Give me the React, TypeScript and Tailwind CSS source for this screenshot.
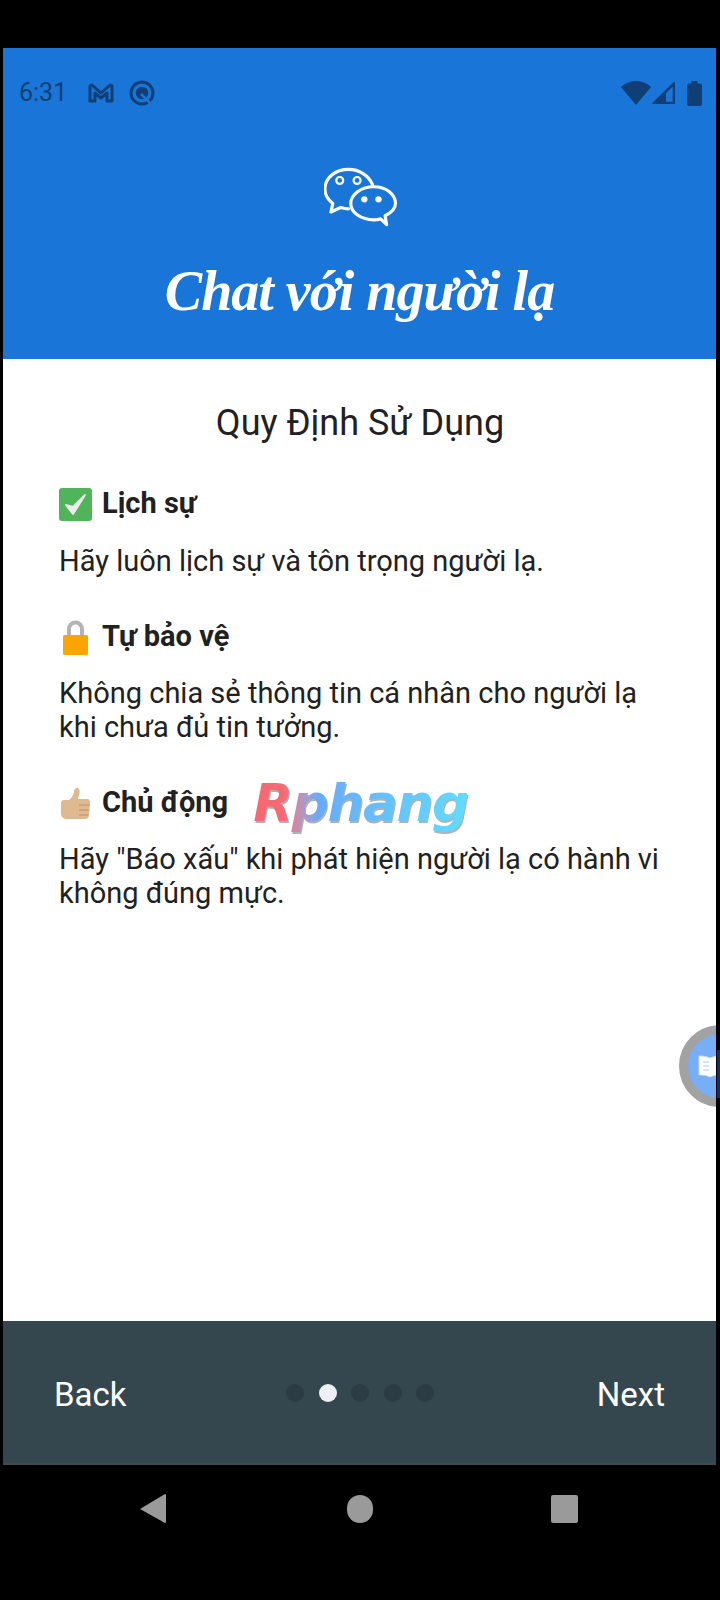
export default function App() {
  const dots = [false, true, false, false, false];
  return (
    <div className="relative w-[720px] h-[1600px] bg-black pt-[48px] pl-[3px] pr-[4px] font-['Roboto',sans-serif] overflow-hidden">
      {/* Header */}
      <header className="h-[311px] bg-[#1976d8] flex flex-col items-center">
        <div className="w-full h-[90px] flex items-center pl-[16px] pr-[14px] text-[#0f3f74]">
          <span className="text-[25px] w-[69px]">6:31</span>
          <svg width="26" height="20" viewBox="0 0 26 20" fill="none" stroke="currentColor" strokeWidth="3" strokeLinejoin="round">
            <path d="M2 18V3.500c0-1.500 1.600-2 2.600-1L13 10l8.400-7.500c1-1 2.600-.5 2.600 1V18h-5V10l-6 5-6-5v8z" />
          </svg>
          <svg className="ml-[15px]" width="26" height="26" viewBox="0 0 26 26" fill="none" stroke="currentColor">
            <circle cx="13" cy="13" r="11" strokeWidth="3" />
            <circle cx="13" cy="13" r="5.500" fill="currentColor" strokeWidth="1.500" />
            <path d="M12 14l9 9" stroke="#1976d8" strokeWidth="2.500" />
          </svg>
          <div className="ml-auto flex items-center">
            <svg width="30" height="24" viewBox="0 0 30 24" fill="currentColor">
              <path d="M15 24L0 6C4 2.500 9 0 15 0s11 2.500 15 6z" />
            </svg>
            <svg className="ml-[1px]" width="23" height="22" viewBox="0 0 23 22">
              <path d="M22 1.500V21H2z" fill="none" stroke="currentColor" strokeWidth="2.500" />
              <path d="M14 10v11H2.500z" fill="currentColor" />
            </svg>
            <svg className="ml-[12px]" width="15" height="25" viewBox="0 0 15 25" fill="currentColor">
              <path d="M4.500 0h6v2.500H13a2 2 0 0 1 2 2V23a2 2 0 0 1-2 2H2a2 2 0 0 1-2-2V4.500a2 2 0 0 1 2-2h2.500z" />
            </svg>
          </div>
        </div>
        <svg className="mt-[29px] ml-[2px]" width="74" height="60" viewBox="70 50 235 185" fill="none" stroke="#fff" strokeWidth="10" strokeLinejoin="round" strokeLinecap="round">
          <path d="M224 103C212 74 182 55 148 55 106 55 73 82 73 117c0 18 9 34 25 46l-6 27 31-14c10 3 16 4 25 4" />
          <path d="M228 110c-40 0-73 24-73 53s33 52 73 52c8 0 15-1 22-3l19 18-5-28c20-10 33-23 33-39 0-29-29-53-69-53z" />
          <circle cx="120" cy="90" r="11" strokeWidth="7" />
          <circle cx="175" cy="90" r="11" strokeWidth="7" />
          <circle cx="198" cy="150" r="10" fill="#fff" stroke="none" />
          <circle cx="243" cy="150" r="10" fill="#fff" stroke="none" />
        </svg>
        <h1 className="mt-[29px] text-white text-[56px] leading-[70px] font-bold italic font-['Liberation_Serif',cursive] tracking-[-1px] whitespace-nowrap">
          Chat với người lạ
        </h1>
      </header>

      {/* Rules */}
      <main className="relative h-[962px] bg-white pt-[44px] pl-[56px] pr-[40px] text-[#212121] overflow-hidden">
        <h2 className="text-center text-[36px] leading-[40px] pr-[15px] mb-[43px]">Quy Định Sử Dụng</h2>

        <div className="flex items-center h-[36px] text-[29px] font-bold">
          <svg className="w-[33px] h-[33px] mr-[10px]" viewBox="0 0 33 33">
            <rect width="33" height="33" rx="3" fill="#4fb45a" />
            <path d="M7 17l7 9L26 7l-12 12z" fill="#ececec" stroke="#ececec" strokeWidth="2" strokeLinejoin="round" />
          </svg>
          Lịch sự
        </div>
        <p className="mt-[22px] text-[29px] leading-[34px]">Hãy luôn lịch sự và tôn trọng người lạ.</p>

        <div className="mt-[41px] flex items-center h-[36px] text-[29px] font-bold">
          <svg className="w-[33px] h-[35px] mr-[10px]" viewBox="0 0 33 35">
            <path d="M10 17V9a6.500 6.500 0 0 1 13 0v8" fill="none" stroke="#b4b4b4" strokeWidth="4" />
            <rect x="4" y="15" width="25" height="20" rx="1.500" fill="#fba504" />
          </svg>
          Tự bảo vệ
        </div>
        <p className="mt-[21px] text-[29px] leading-[34px]">
          Không chia sẻ thông tin cá nhân cho người lạ
          <br />
          khi chưa đủ tin tưởng.
        </p>

        <div className="mt-[41px] flex items-center h-[36px] text-[29px] font-bold">
          <svg className="w-[33px] h-[33px] mr-[10px]" viewBox="0 0 33 33">
            <path d="M2 16c0-2 1-3 3-3h5c3-2 4-5 5-8 0-3 2-5 4-4 2 1 2 4 1 7l-1 4h9c2 0 3 1 3 3l-1 13c0 3-2 4-4 4H8c-3 0-6-2-6-5z" fill="#dfb98f" />
            <path d="M20 18h11M20 23h10M20 28h9" stroke="#bd9368" strokeWidth="1.200" />
          </svg>
          Chủ động
          <span className="ml-[25px] text-[52px] leading-[76px] font-bold italic font-['DejaVu_Sans',sans-serif] tracking-[-1.5px] bg-linear-to-r from-[#f56a72] from-14% via-[#69aaf7] via-30% to-[#62dcfc] bg-clip-text text-transparent drop-shadow-[1px_2px_0_#a9b4b8]">
            Rphang
          </span>
        </div>
        <p className="mt-[21px] text-[29px] leading-[34px]">
          Hãy "Báo xấu" khi phát hiện người lạ có hành vi
          <br />
          không đúng mực.
        </p>

        {/* Floating reader button */}
        <div className="absolute top-[666px] right-[-45px] w-[82px] h-[82px] rounded-full bg-[#78aef5] border-[9px] border-[#a2a2a2] flex items-center pl-[10px]">
          <svg width="24" height="24" viewBox="0 0 24 24" fill="#fff" stroke="#c6dcfa" strokeWidth="1">
            <path d="M1 2c4 0 8 .5 11 2 3-1.500 7-2 11-2v19c-4 0-8 .5-11 2-3-1.500-7-2-11-2z" />
            <path d="M5 8h6M5 12h6M5 16h6" strokeWidth="1.500" fill="none" />
          </svg>
        </div>
      </main>

      {/* Bleed of the button on the dark edge */}
      <div className="absolute top-[1050px] right-0 w-[3px] h-[48px] bg-[#0f2f6e]" />

      {/* Footer */}
      <footer className="h-[144px] bg-[#34474f] border-b-2 border-[#3f4a4e] grid grid-cols-[1fr_auto_1fr] items-center pl-[52px] pr-[51px] text-white text-[33px]">
        <span className="pt-[5px] -ml-[1px]">Back</span>
        <div className="flex gap-[14.5px] pt-[2px]">
          {dots.map((active, i) => (
            <span key={i} className={active ? "w-[18px] h-[18px] rounded-full bg-[#eef0f6]" : "w-[18px] h-[18px] rounded-full bg-[#2c3c44]"} />
          ))}
        </div>
        <span className="pt-[5px] text-right">Next</span>
      </footer>

      {/* Android nav */}
      <nav className="flex items-center pt-[29px] pl-[137px]">
        <svg width="26" height="29" viewBox="0 0 26 29" fill="#9a9a9a">
          <path d="M25 0a1 1 0 0 1 1 1v27a1 1 0 0 1-1 1L0 15z" />
        </svg>
        <span className="ml-[181px] w-[26px] h-[28px] rounded-full bg-[#9a9a9a]" />
        <span className="ml-[178px] w-[27px] h-[28px] rounded-[2px] bg-[#9a9a9a]" />
      </nav>
    </div>
  );
}
